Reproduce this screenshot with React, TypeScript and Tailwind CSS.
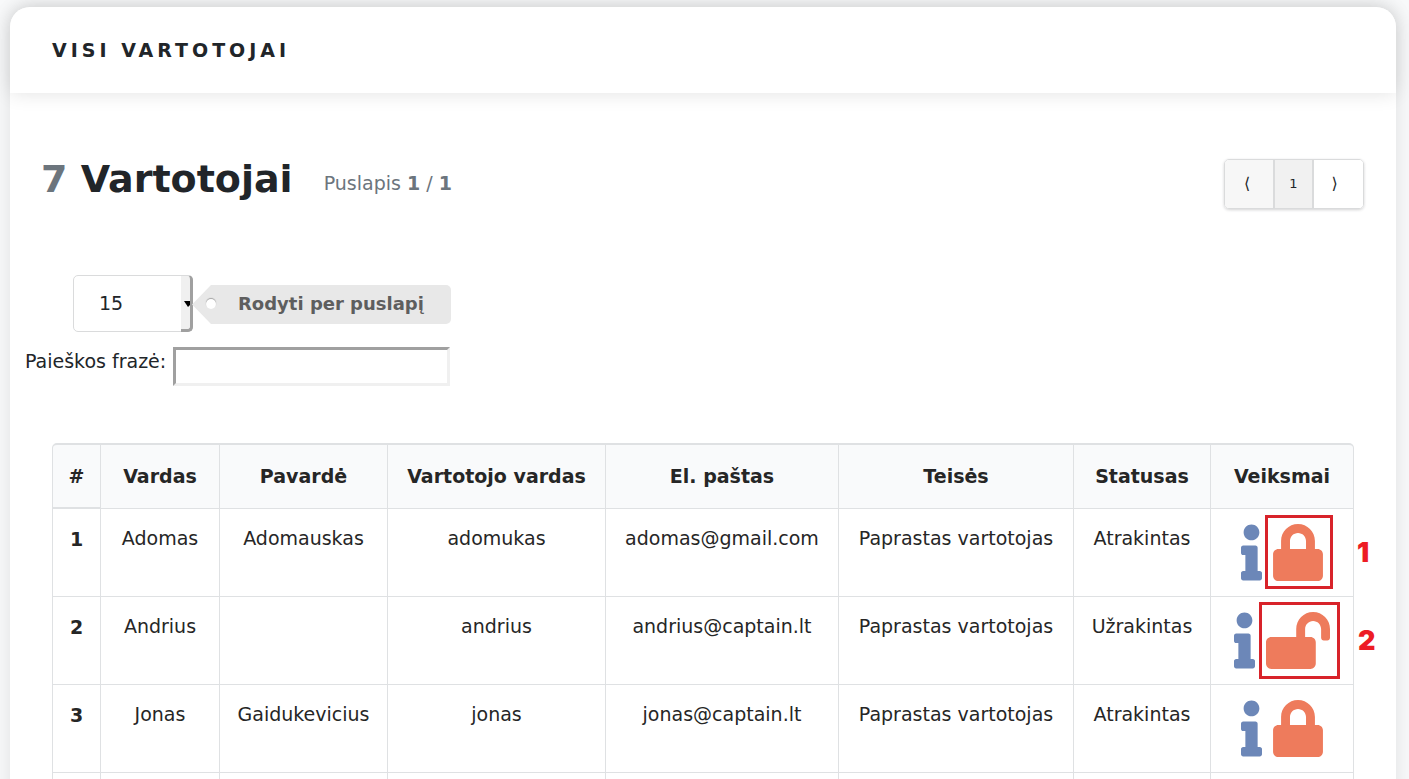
import { FaInfo, FaLock, FaLockOpen } from "react-icons/fa";

type User = {
  id: number;
  name: string;
  surname: string;
  username: string;
  email: string;
  role: string;
  locked: boolean;
  mark?: string;
};

const users: User[] = [
  { id: 1, name: "Adomas", surname: "Adomauskas", username: "adomukas", email: "adomas@gmail.com", role: "Paprastas vartotojas", locked: false, mark: "1" },
  { id: 2, name: "Andrius", surname: "", username: "andrius", email: "andrius@captain.lt", role: "Paprastas vartotojas", locked: true, mark: "2" },
  { id: 3, name: "Jonas", surname: "Gaidukevicius", username: "jonas", email: "jonas@captain.lt", role: "Paprastas vartotojas", locked: false },
];

const headings = ["Vardas", "Pavardė", "Vartotojo vardas", "El. paštas", "Teisės", "Statusas", "Veiksmai"];

const cell = "border-b border-r border-[#dfe1e3] pt-[15px] align-top";

function Mark({ label, wide }: { label: string; wide: boolean }) {
  return (
    <>
      <span
        className={
          wide
            ? "pointer-events-none absolute -top-[10px] -left-[7px] h-[77px] w-[81px] border-[3px] border-[#d8232a]"
            : "pointer-events-none absolute -top-[9px] -left-[8px] h-[74px] w-[68px] border-[3px] border-[#d8232a]"
        }
      />
      <span
        className={
          wide
            ? "absolute top-[13px] left-[92px] font-[Inter,Arial,sans-serif] text-[27px] leading-8 font-black text-[#ed1c24]"
            : "absolute top-[13px] left-[84px] font-[Inter,Arial,sans-serif] text-[27px] leading-8 font-black text-[#ed1c24]"
        }
      >
        {label}
      </span>
    </>
  );
}

function UserRow({ user }: { user: User }) {
  return (
    <tr className="h-[88px]">
      <th scope="row" className="border-r border-b border-l border-[#dfe1e3] pt-4 align-top font-bold">
        {user.id}
      </th>
      <td className={cell}>{user.name}</td>
      <td className={cell}>{user.surname}</td>
      <td className={cell}>{user.username}</td>
      <td className={cell}>{user.email}</td>
      <td className={cell}>{user.role}</td>
      <td className={cell}>{user.locked ? "Užrakintas" : "Atrakintas"}</td>
      <td className="border-r border-b border-[#dfe1e3] pt-[15px] align-top">
        <div className="flex justify-center gap-[11px]">
          <a href="#info" aria-label="Informacija" className="block text-[#6c87b8]">
            <FaInfo className="h-[57px] w-[21px]" />
          </a>
          <span className="relative">
            <button type="button" aria-label={user.locked ? "Atrakinti" : "Užrakinti"} className="block text-[#ee7b5c]">
              {user.locked ? <FaLockOpen className="h-[57px] w-[64px]" /> : <FaLock className="h-[57px] w-[50px]" />}
            </button>
            {user.mark && <Mark label={user.mark} wide={user.locked} />}
          </span>
        </div>
      </td>
    </tr>
  );
}

export default function App() {
  return (
    <div className="h-screen overflow-hidden bg-[#f8f9fa] pt-[7px] pr-[13px] pl-[10px] font-['DejaVu_Sans',Verdana,sans-serif] text-[19px] leading-7 text-[#212529]">
      <main className="min-h-screen rounded-t-[20px] bg-white shadow-[0_0_20px_rgba(0,0,0,0.1)]">
        <header className="rounded-t-[20px] bg-white px-[42px] py-[29px] shadow-[0_0_20px_rgba(0,0,0,0.12)]">
          <h1 className="text-[19px] leading-7 font-bold tracking-[4px] uppercase">Visi vartotojai</h1>
        </header>

        <section className="flex items-start justify-between pt-[66px] pr-8 pl-[31px]">
          <div className="flex items-center gap-[31px]">
            <h2 className="text-[38px] leading-10 font-bold">
              <span className="text-[#6c757d]">7</span> Vartotojai
            </h2>
            <p className="pt-2 text-[#6c757d]">
              Puslapis <b>1</b> / <b>1</b>
            </p>
          </div>
          <nav aria-label="Puslapiai" className="flex h-[50px] overflow-hidden rounded-[5px] border border-[#dadbdc] text-[16px] shadow-[0_1px_3px_rgba(34,36,38,0.2)]">
            <button type="button" className="w-12 bg-[#f7f7f7] pr-1">⟨</button>
            <button type="button" className="w-[41px] border-x-2 border-[#dadbdc] bg-[#f1f1f1] text-[13px]">1</button>
            <button type="button" className="w-[49px] bg-white pr-2">⟩</button>
          </nav>
        </section>

        <section className="pt-[66px] pl-[15px]">
          <div className="flex items-center pl-12">
            <div className="relative">
              <select
                id="per-page"
                defaultValue="15"
                className="block h-[57px] w-[120px] appearance-none rounded-[5px] border border-[#dadbdc] bg-white pb-[2px] pl-[25px]"
              >
                <option>15</option>
                <option>30</option>
              </select>
              <span className="pointer-events-none absolute inset-y-0 right-0 flex w-3 items-center justify-end rounded-r-[5px] border-t border-r-[3px] border-b-[3px] border-t-[#dadbdc] border-r-[#a0a0a0] border-b-[#a0a0a0] bg-[#f0f0f0] pt-[2px]">
                <svg width="6" height="6" viewBox="0 0 6 6" aria-hidden="true">
                  <path d="M0 0h6v4l-2 2z" fill="#000" />
                </svg>
              </span>
            </div>
            <label htmlFor="per-page" className="relative -ml-px flex h-10 items-center pt-px text-[18px] font-bold text-[#5e5e5e]">
              <svg width="19" height="39" viewBox="0 0 19 39" aria-hidden="true">
                <path d="M19 0v39L0 19.500z" fill="#e8e8e8" />
              </svg>
              <span className="flex h-full items-center rounded-r-[5px] bg-[#e8e8e8] pr-[27px] pb-px pl-[27px]">Rodyti per puslapį</span>
              <span className="absolute top-[15px] left-[14px] h-[10px] w-[10px] rounded-full bg-white shadow-[0_-1px_1px_rgba(0,0,0,0.3)]" />
            </label>
          </div>
          <div className="flex items-start gap-[7px] pt-[15px]">
            <label htmlFor="search">Paieškos frazė:</label>
            <input
              id="search"
              type="text"
              className="h-[39px] w-[277px] border-[3px] border-t-[#a0a0a0] border-r-[#f0f0f0] border-b-[#f0f0f0] border-l-[#a0a0a0] bg-white px-1"
            />
          </div>
        </section>

        <section className="px-[42px] pt-[57px]">
          <table className="w-full table-fixed border-separate border-spacing-0 text-center text-[#262626]">
            <colgroup>
              <col className="w-[49px]" />
              <col className="w-[119px]" />
              <col className="w-[168px]" />
              <col className="w-[218px]" />
              <col className="w-[233px]" />
              <col className="w-[235px]" />
              <col className="w-[137px]" />
              <col className="w-[143px]" />
            </colgroup>
            <thead>
              <tr className="h-[66px]">
                <th scope="col" className="rounded-tl-[5px] border-t-2 border-r border-b-2 border-l border-[#dfe1e3] bg-[#f9fafb] font-bold">#</th>
                {headings.map((h) => (
                  <th key={h} scope="col" className="border-t-2 border-r border-b border-[#dfe1e3] bg-[#f9fafb] pb-px font-bold last:rounded-tr-[5px]">
                    {h}
                  </th>
                ))}
              </tr>
            </thead>
            <tbody>
              {users.map((u) => (
                <UserRow key={u.id} user={u} />
              ))}
              <tr className="h-[88px]">
                <td className="border-r border-b border-l border-[#dfe1e3]" />
                {headings.map((h) => (
                  <td key={h} className="border-r border-b border-[#dfe1e3]" />
                ))}
              </tr>
            </tbody>
          </table>
        </section>
      </main>
    </div>
  );
}
